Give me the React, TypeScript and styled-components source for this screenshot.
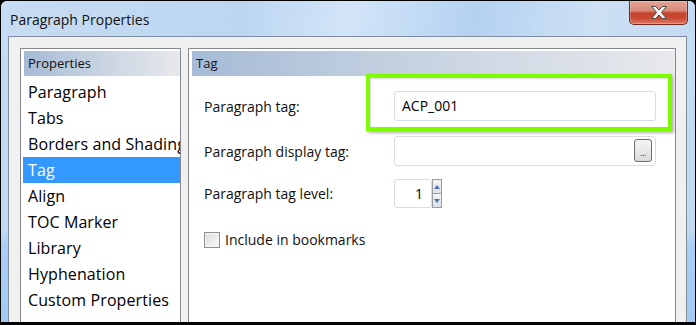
import styled, { createGlobalStyle } from "styled-components"

const GlobalStyle = createGlobalStyle`
    html, body {
        margin: 0;
        padding: 0;
        background: #000;
    }
    body {
        font-family: "Segoe UI", "Open Sans", sans-serif;
        color: #000;
    }
    * {
        box-sizing: border-box;
    }
`

const Screen = styled.div`
    width: 696px;
    height: 325px;
    padding: 1px 1px 3px 1px;
    background: #000;
    overflow: hidden;
`

const Frame = styled.div`
    height: 100%;
    display: flex;
    flex-direction: column;
    padding: 0 8px 0 7px;
    border-radius: 6px 6px 0 0;
    background: linear-gradient(180deg, #c6dcf3 0%, #c2d9f1 72%, #a9cff6 76%, #a3caf2 100%);
`

const TitleBar = styled.div`
    height: 35px;
    margin: 0 -8px 0 -7px;
    padding: 0 7px 0 9px;
    display: flex;
    justify-content: space-between;
    align-items: flex-start;
    border-radius: 6px 6px 0 0;
    background: linear-gradient(100deg, #c7dcf2 0%, #bcd6f1 35%, #d3e5f8 50%, #b4d2f1 68%, #cde0f4 85%, #c3daf2 100%);
`

const Title = styled.div`
    padding-top: 10px;
    font-size: 14px;
    line-height: 18px;
    color: #111;
`

const CloseButton = styled.div`
    width: 59px;
    height: 24px;
    display: flex;
    align-items: center;
    justify-content: center;
    border: 1px solid #6d2a21;
    border-top: none;
    border-radius: 0 0 5px 5px;
    background: linear-gradient(180deg, #e3a597 0%, #d98a79 42%, #c6432e 52%, #c94a34 76%, #e07c64 100%);
    box-shadow: inset 0 0 0 1px rgba(255, 255, 255, 0.25);
`

const DialogBody = styled.div`
    flex: 1;
    min-height: 0;
    display: flex;
    gap: 7px;
    padding: 11px 10px 0 11px;
    border: 1px solid #7d8b9d;
    border-bottom: none;
    background: #f0f0f0;
    overflow: hidden;
`

const Panel = styled.div<{ $width?: number }>`
    ${props => props.$width ? `width: ${props.$width}px;` : "flex: 1;"}
    flex-shrink: 0;
    display: flex;
    flex-direction: column;
    padding: 2px 0 0 2px;
    border: 1px solid #828790;
    border-bottom: none;
    background: #fff;
    overflow: hidden;
`

const PanelHeader = styled.div`
    height: 25px;
    margin-left: 1px;
    padding-left: 4px;
    font-size: 13px;
    line-height: 25px;
    color: #111;
    background: linear-gradient(90deg, #a6bbd6 0%, #c9d4e2 50%, #e8e9ec 100%);
`

const List = styled.div`
    margin-top: 3px;
    display: flex;
    flex-direction: column;
`

const ListItem = styled.div<{ $selected?: boolean }>`
    height: 26px;
    padding-left: 5px;
    font-size: 16px;
    line-height: 26px;
    letter-spacing: 0.1px;
    white-space: nowrap;
    overflow: hidden;
    color: ${props => props.$selected ? "#fff" : "#000"};
    background: ${props => props.$selected ? "#3399ff" : "transparent"};
`

const Form = styled.div`
    position: relative;
    padding: 15px 0 0 13px;
    display: flex;
    flex-direction: column;
`

const FieldRow = styled.div<{ $height: number; $gap: number }>`
    height: ${props => props.$height}px;
    margin-bottom: ${props => props.$gap}px;
    display: flex;
    align-items: center;
`

const FieldLabel = styled.div`
    width: 190px;
    font-size: 14px;
    color: #111;
`

const TextBox = styled.div<{ $width: number; $align?: string }>`
    position: relative;
    width: ${props => props.$width}px;
    height: 100%;
    display: flex;
    align-items: center;
    justify-content: ${props => props.$align === "right" ? "flex-end" : "flex-start"};
    padding: 0 8px 1px 7px;
    font-size: 14px;
    border: 1px solid #d8dde4;
    border-radius: 3px;
    background: #fff;
`

const BrowseButton = styled.div`
    position: absolute;
    right: 3px;
    top: 2px;
    width: 18px;
    height: 23px;
    display: flex;
    align-items: flex-end;
    justify-content: center;
    padding-bottom: 4px;
    border: 1px solid #707070;
    border-radius: 3px;
    background: linear-gradient(180deg, #f4f4f4 0%, #e9e9e9 50%, #dcdcdc 100%);
    font-size: 9px;
    line-height: 9px;
    color: #333;
    letter-spacing: -0.5px;
`

const Spinner = styled.div`
    width: 10px;
    height: 29px;
    display: flex;
    flex-direction: column;
    border: 1px solid #9c9c9c;
    background: #9c9c9c;
    gap: 1px;
`

const SpinHalf = styled.div`
    flex: 1;
    display: flex;
    align-items: center;
    justify-content: center;
    background: linear-gradient(180deg, #f2f4f7 0%, #dde2e8 100%);
`

const CheckRow = styled.label`
    display: flex;
    align-items: center;
    gap: 5px;
    font-size: 14px;
    color: #111;
`

const CheckBox = styled.span`
    width: 16px;
    height: 16px;
    border: 1px solid #8e8f8f;
    background: linear-gradient(135deg, #dcdcdc 0%, #eeeeee 60%, #fbfbfb 100%);
    box-shadow: inset 0 0 0 1px #f4f4f4;
`

const Highlight = styled.div`
    position: absolute;
    left: 175px;
    top: -2px;
    width: 306px;
    height: 57px;
    border: 4px solid #7dfc00;
    box-shadow: 2px 2px 3px rgba(0, 0, 0, 0.3), inset 1px 1px 2px rgba(0, 0, 0, 0.15);
    pointer-events: none;
`

const sections = [
    "Paragraph",
    "Tabs",
    "Borders and Shading",
    "Tag",
    "Align",
    "TOC Marker",
    "Library",
    "Hyphenation",
    "Custom Properties",
]

const CloseGlyph = () => (
    <svg width="16" height="13" viewBox="0 0 16 13">
        <polygon
            points="0.5,0.5 4.7,0.5 8,4 11.3,0.5 15.5,0.5 10.4,6.5 15.5,12.5 11.3,12.5 8,9 4.7,12.5 0.5,12.5 5.6,6.5"
            fill="#f4f4f4"
            stroke="#4a4a4a"
            strokeWidth="1"
            strokeLinejoin="round"
        />
    </svg>
)

const Arrow = ({ up }: { up?: boolean }) => (
    <svg width="6" height="4" viewBox="0 0 6 4">
        <polygon points={up ? "0,4 3,0 6,4" : "0,0 6,0 3,4"} fill="#4f73ad" />
    </svg>
)

export default function App() {
    return (
        <Screen>
            <GlobalStyle />
            <Frame>
                <TitleBar>
                    <Title>Paragraph Properties</Title>
                    <CloseButton>
                        <CloseGlyph />
                    </CloseButton>
                </TitleBar>
                <DialogBody>
                    <Panel $width={161}>
                        <PanelHeader>Properties</PanelHeader>
                        <List>
                            {sections.map(name => (
                                <ListItem key={name} $selected={name === "Tag"}>{name}</ListItem>
                            ))}
                        </List>
                    </Panel>
                    <Panel>
                        <PanelHeader>Tag</PanelHeader>
                        <Form>
                            <FieldRow $height={30} $gap={15}>
                                <FieldLabel>Paragraph tag:</FieldLabel>
                                <TextBox $width={262}>ACP_001</TextBox>
                            </FieldRow>
                            <FieldRow $height={30} $gap={13}>
                                <FieldLabel>Paragraph display tag:</FieldLabel>
                                <TextBox $width={262}>
                                    <BrowseButton>...</BrowseButton>
                                </TextBox>
                            </FieldRow>
                            <FieldRow $height={29} $gap={22}>
                                <FieldLabel>Paragraph tag level:</FieldLabel>
                                <TextBox $width={38} $align="right">1</TextBox>
                                <Spinner>
                                    <SpinHalf><Arrow up /></SpinHalf>
                                    <SpinHalf><Arrow /></SpinHalf>
                                </Spinner>
                            </FieldRow>
                            <CheckRow>
                                <CheckBox />
                                Include in bookmarks
                            </CheckRow>
                            <Highlight />
                        </Form>
                    </Panel>
                </DialogBody>
            </Frame>
        </Screen>
    )
}
